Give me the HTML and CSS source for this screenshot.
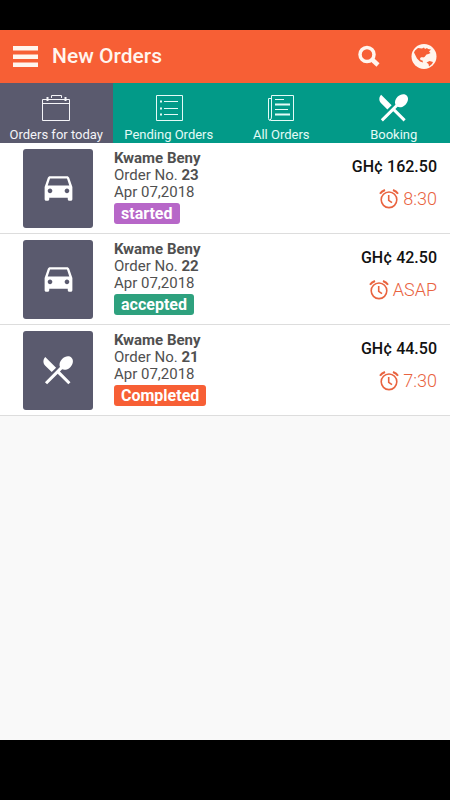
FILE: index.html
```html
<!DOCTYPE html>
<html lang="en">
<head>
<meta charset="utf-8">
<meta name="viewport" content="width=device-width, initial-scale=1">
<title>New Orders</title>
<link rel="stylesheet" href="styles.css">
</head>
<body>
<svg class="symbols" aria-hidden="true">
  <symbol id="car" viewBox="0 1 24 24"><path d="M18.92 6.01C18.72 5.42 18.16 5 17.5 5h-11c-.66 0-1.21.42-1.42 1.01L3 12v8c0 .55.45 1 1 1h1c.55 0 1-.45 1-1v-1h12v1c0 .55.45 1 1 1h1c.55 0 1-.45 1-1v-8zM6.500 16c-.83 0-1.500-.67-1.500-1.500S5.670 13 6.500 13s1.500.67 1.500 1.500S7.330 16 6.500 16zm11 0c-.83 0-1.500-.67-1.500-1.500s.67-1.500 1.500-1.500 1.500.67 1.500 1.500-.67 1.500-1.500 1.500zM5 11l1.500-4.500h11L19 11z"/></symbol>
  <symbol id="cutlery" viewBox="0.5 0.3 24 24"><path d="M8.100 13.340l2.830-2.830L3.910 3.500c-1.560 1.560-1.560 4.090 0 5.660zm6.780-1.810c1.530.71 3.680.21 5.270-1.380 1.910-1.910 2.280-4.650.81-6.120-1.460-1.460-4.200-1.100-6.120.81-1.590 1.590-2.090 3.740-1.380 5.270L3.700 19.870l1.410 1.410L12 14.410l6.880 6.880 1.410-1.410L13.410 13z"/></symbol>
  <symbol id="alarm" viewBox="0 0 20 20"><g fill="none" stroke="currentColor" stroke-width="1.600"><circle cx="10" cy="10.800" r="7.800"/><path d="M9.700 6v5.300l3.300 2.400"/><path stroke-width="2" d="M1 4.800Q2.500 2.500 6 1M19 4.800Q17.500 2.500 14 1"/></g></symbol>
</svg>
<div class="app">
  <header class="bar">
    <button class="icon-button" aria-label="Menu"><svg width="26" height="22" viewBox="0 0 26 22"><path d="M1 0h25v4.500H1zM1 8.500h25v4.500H1zM1 16.500h25v4.500H1z"/></svg></button>
    <h1>New Orders</h1>
    <button class="icon-button search" aria-label="Search"><svg width="24" height="24" viewBox="0 0 24 24"><g fill="none" stroke="currentColor"><circle cx="11" cy="9.500" r="7" stroke-width="3.500"/><path d="M16 14.500l6 5.500" stroke-width="4.500"/></g></svg></button>
    <button class="icon-button" aria-label="Language"><svg width="26" height="26" viewBox="0 0 26 26"><circle cx="13" cy="12.500" r="12.500"/><path class="land" d="M4 6.500L7 4l4 .5 2-1 1 1.500 2-1 1 1 3 .5-2 2 1.500 1.500-2 1-2 .5-2 2.500-1.500.5-1-.5-2 1 .5 2 2 .5.5 2-3-1-3-3-2-4-1-2zM15.500 18.500l3-1.500 3.500 1-1 2-3 2.500-.5-2.500z"/></svg></button>
  </header>
  <nav class="tabs">
    <a class="tab active" href="#today" aria-current="page"><svg width="30" height="28" viewBox="0 0 30 28"><g fill="none" stroke="currentColor"><path d="M1.500 5.500h27v21h-27zM1.500 9.500h27M10.500 4V1.500h10V4"/><path stroke-width="2" d="M6.500 3v4M24.500 3v4"/></g></svg>Orders for today</a>
    <a class="tab" href="#pending"><svg width="30" height="28" viewBox="0 0 30 28"><g fill="none" stroke="currentColor"><path d="M2.500 1.500h26v25h-26zM10 7.500h14M10 14.500h14M10 20.500h14"/><path stroke-width="2" d="M6 7.500h2M6 14.500h2M6 20.500h2"/></g></svg>Pending Orders</a>
    <a class="tab" href="#all"><svg width="30" height="28" viewBox="0 0 30 28"><g fill="none" stroke="currentColor"><path d="M5.500 23V1.500h22v25H4.500q-2 0-2-2v-20h3M5.500 23q0 3-2 3"/><path d="M9 5.500h9M9 15.500h13"/><path stroke-width="2" d="M9 10.500h15M9 20.500h15"/></g></svg>All Orders</a>
    <a class="tab" href="#booking"><svg class="large" width="36" height="36"><use href="#cutlery"/></svg>Booking</a>
  </nav>
  <main>
    <ul class="orders">
      <li class="order">
        <div class="kind"><svg width="37" height="37"><use href="#car"/></svg></div>
        <div class="details"><strong>Kwame Beny</strong><span>Order No. <b>23</b></span><span>Apr 07,2018</span><span class="status started">started</span></div>
        <div class="summary"><span class="price">GH¢ 162.50</span><span class="time"><svg width="20" height="20"><use href="#alarm"/></svg>8:30</span></div>
      </li>
      <li class="order">
        <div class="kind"><svg width="37" height="37"><use href="#car"/></svg></div>
        <div class="details"><strong>Kwame Beny</strong><span>Order No. <b>22</b></span><span>Apr 07,2018</span><span class="status accepted">accepted</span></div>
        <div class="summary"><span class="price">GH¢ 42.50</span><span class="time"><svg width="20" height="20"><use href="#alarm"/></svg>ASAP</span></div>
      </li>
      <li class="order">
        <div class="kind"><svg width="37" height="37"><use href="#cutlery"/></svg></div>
        <div class="details"><strong>Kwame Beny</strong><span>Order No. <b>21</b></span><span>Apr 07,2018</span><span class="status completed">Completed</span></div>
        <div class="summary"><span class="price">GH¢ 44.50</span><span class="time"><svg width="20" height="20"><use href="#alarm"/></svg>7:30</span></div>
      </li>
    </ul>
  </main>
</div>
</body>
</html>
```
FILE: styles.css
```css
* { box-sizing: border-box; }
body {
  margin: 0;
  background: #000;
  font-family: Roboto, "Liberation Sans", sans-serif;
  color: #505050;
}
svg { display: block; fill: currentColor; }
.symbols { display: none; }
.app {
  display: flex;
  flex-direction: column;
  min-height: 100vh;
  padding: 30px 0 60px;
}
.bar {
  display: flex;
  align-items: center;
  height: 53px;
  padding: 0 13px 0 12px;
  background: #f75f35;
  color: #fff5ee;
}
.bar h1 {
  flex: 1;
  margin: 0 0 2px 14px;
  font-size: 21px;
  line-height: 28px;
  font-weight: 500;
}
.icon-button {
  padding: 0;
  border: 0;
  background: none;
  color: inherit;
}
.search { margin-right: 31px; }
.land { fill: #f75f35; }
.tabs {
  display: grid;
  grid-template-columns: repeat(4, 1fr);
  background: #029a88;
}
.tab {
  display: flex;
  flex-direction: column;
  align-items: center;
  gap: 5px;
  height: 60px;
  padding-top: 11px;
  color: #e4fbf7;
  font-size: 13px;
  line-height: 16px;
  text-decoration: none;
  white-space: nowrap;
}
.tab.active { background: #5a5a6e; color: #f4f4f8; }
.tab .large { margin: -4px 0; color: #fff; }
main { flex: 1; background: #f9f9f9; }
.orders { margin: 0; padding: 0; list-style: none; }
.order {
  display: flex;
  height: 91px;
  padding: 6px 13px 0 23px;
  border-bottom: 1px solid #ddd;
  background: #fff;
}
.kind {
  display: grid;
  place-items: center;
  width: 70px;
  height: 79px;
  border-radius: 3px;
  background: #5a5a6e;
  color: #fff;
}
.details {
  display: flex;
  flex: 1;
  flex-direction: column;
  align-items: flex-start;
  margin-left: 21px;
  padding-top: 1px;
  font-size: 15px;
  line-height: 17px;
}
.details b, .details strong { font-weight: 700; }
.status {
  margin-top: 2px;
  padding: 0 7px;
  border-radius: 3px;
  color: #fff;
  font-size: 16px;
  font-weight: 700;
  line-height: 21px;
}
.started { background: #b767c8; }
.accepted { background: #2ea17e; }
.completed { background: #f75f35; }
.summary {
  display: flex;
  flex-direction: column;
  align-items: flex-end;
  gap: 10px;
  padding-top: 8px;
}
.price {
  color: #111;
  font-size: 16px;
  line-height: 20px;
  font-weight: 500;
}
.time {
  display: flex;
  align-items: center;
  gap: 4px;
  color: #e9633f;
  font-size: 18px;
  font-weight: 300;
  line-height: 24px;
}
```
